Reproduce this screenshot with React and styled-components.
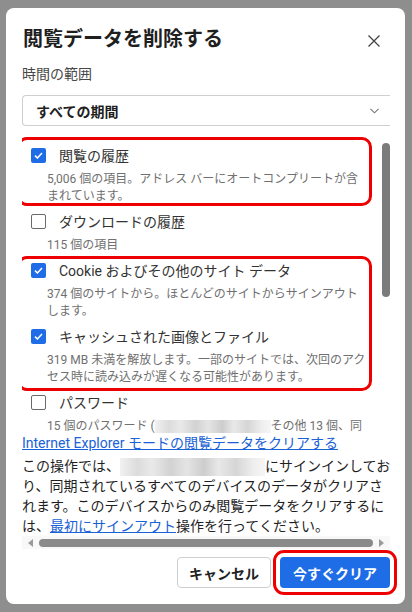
import React from 'react';
import styled, { createGlobalStyle } from 'styled-components';

const GlobalStyle = createGlobalStyle`
  html, body {
    margin: 0;
    padding: 0;
    background: #8e8e8e;
  }
  body {
    font-family: "Roboto", "Noto Sans CJK JP", sans-serif;
    width: 412px;
    height: 612px;
    overflow: hidden;
  }
`;

const Dialog = styled.div`
  margin: 8px 0 0 6px;
  width: 399px;
  height: 596px;
  box-sizing: border-box;
  background: #fff;
  border-radius: 8px;
  display: flex;
  flex-direction: column;
  overflow: hidden;
`;

const Header = styled.div`
  display: flex;
  align-items: center;
  justify-content: space-between;
  padding: 17px 24px 0 17px;
`;

const Title = styled.h1`
  margin: 0;
  font-size: 20px;
  line-height: 28px;
  font-weight: 700;
  color: #1f1f1f;
`;

const CloseButton = styled.button`
  border: none;
  background: none;
  padding: 0;
  width: 14px;
  height: 14px;
  margin-top: 4px;
  display: flex;
  align-items: center;
  justify-content: center;
  cursor: pointer;
`;

const Body = styled.div`
  display: flex;
  flex-direction: column;
  padding-left: 16px;
  width: 370px;
`;

const FieldLabel = styled.div`
  margin-top: 11px;
  font-size: 14px;
  line-height: 20px;
  color: #474747;
`;

const Select = styled.div`
  margin-top: 11px;
  margin-right: 2px;
  height: 31px;
  box-sizing: border-box;
  border: 1px solid #cfcfcf;
  border-right: none;
  border-radius: 4px 0 0 4px;
  display: flex;
  align-items: center;
  justify-content: space-between;
  padding: 0 11px 0 13px;
  font-size: 14px;
  font-weight: 700;
  color: #1f1f1f;
`;

const ListRow = styled.div`
  margin-top: 7px;
  height: 302px;
  display: flex;
  overflow: hidden;
`;

const List = styled.div`
  flex: 1;
  padding-top: 6px;
  display: flex;
  flex-direction: column;
`;

const VScroll = styled.div`
  width: 8px;
  margin: 0 2px 0 8px;
  flex-shrink: 0;
`;

const VThumb = styled.div`
  margin-top: 10px;
  height: 154px;
  border-radius: 4px;
  background: #7b7b7b;
`;

// red annotation frame drawn over a group of rows
const Group = styled.div`
  position: relative;
  display: flex;
  flex-direction: column;

  &::after {
    content: '';
    position: absolute;
    top: ${(p) => p.$top}px;
    bottom: ${(p) => p.$bottom}px;
    left: -5px;
    right: 2px;
    border: 3px solid #ee0000;
    border-radius: 10px;
    pointer-events: none;
  }
`;

const Item = styled.div`
  display: flex;
  flex-direction: column;
  padding: 0 6px 0 9px;
  width: 352px;
  box-sizing: border-box;
`;

const ItemRow = styled.label`
  height: 32px;
  display: flex;
  align-items: center;
  gap: 13px;
  font-size: 14px;
  color: #333;
`;

const Box = styled.span`
  width: 15px;
  height: 15px;
  box-sizing: border-box;
  border-radius: 2px;
  flex-shrink: 0;
  display: flex;
  align-items: center;
  justify-content: center;
  background: ${(p) => (p.$checked ? '#1f6de6' : '#fff')};
  border: ${(p) => (p.$checked ? 'none' : '1px solid #6a6a6a')};
`;

const Desc = styled.div`
  padding-left: 16px;
  font-size: 12px;
  line-height: 17px;
  color: #707070;
`;

const Blur = styled.span`
  display: inline-block;
  width: ${(p) => p.$w}px;
  height: ${(p) => p.$h}px;
  vertical-align: middle;
  background: linear-gradient(
    90deg,
    #f1f1f1 0%,
    #dcdcdc 12%,
    #e9e9e9 22%,
    #d2d2d2 35%,
    #e4e4e4 46%,
    #cdcdcd 58%,
    #e8e8e8 68%,
    #d6d6d6 80%,
    #eeeeee 92%,
    #f6f6f6 100%
  );
`;

const Link = styled.a`
  margin-top: -2px;
  font-size: 14px;
  line-height: 20px;
  color: #1a62d6;
  text-decoration: underline;
  white-space: nowrap;
`;

const Paragraph = styled.p`
  margin: 3px 0 0;
  font-size: 14px;
  line-height: 20px;
  color: #1f1f1f;

  a {
    color: #1a62d6;
  }
`;

const HScroll = styled.div`
  height: 13px;
  margin-right: 2px;
  background: #f8f8f8;
  display: flex;
  align-items: center;
  padding: 0 6px;
  gap: 6px;
`;

const Arrow = styled.span`
  width: 0;
  height: 0;
  border-top: 4px solid transparent;
  border-bottom: 4px solid transparent;
  border-left: ${(p) => (p.$dir === 'right' ? '5px solid #9a9a9a' : 'none')};
  border-right: ${(p) => (p.$dir === 'left' ? '5px solid #9a9a9a' : 'none')};
`;

const HThumb = styled.div`
  flex: 1;
  height: 8px;
  border-radius: 4px;
  background: #8a8a8a;
`;

const Footer = styled.div`
  margin-top: 8px;
  padding: 0 15px 16px 0;
  display: flex;
  justify-content: flex-end;
  gap: 9px;
`;

const Button = styled.button`
  height: 31px;
  padding: 0;
  width: ${(p) => (p.primary ? '110px' : '94px')};
  border-radius: 4px;
  font-family: inherit;
  font-size: 14px;
  font-weight: 700;
  cursor: pointer;
  background: ${(p) => (p.primary ? '#1f6de6' : '#fff')};
  color: ${(p) => (p.primary ? '#fff' : '#222')};
  border: ${(p) => (p.primary ? 'none' : '1px solid #cfcfcf')};
  outline: ${(p) => (p.marked ? '3px solid #ee0000' : 'none')};
  outline-offset: 4px;
`;

const Check = () => (
  <svg width="9" height="7" viewBox="0 0 9 7">
    <path d="M1 3.6 L3.4 6 L8 1" fill="none" stroke="#fff" strokeWidth="1.5" />
  </svg>
);

const CheckItem = ({ checked, label, children }) => (
  <Item>
    <ItemRow>
      <Box $checked={checked}>{checked && <Check />}</Box>
      {label}
    </ItemRow>
    <Desc>{children}</Desc>
  </Item>
);

const App = () => {
  return (
    <>
      <GlobalStyle />
      <Dialog>
        <Header>
          <Title>閲覧データを削除する</Title>
          <CloseButton aria-label="閉じる">
            <svg width="12" height="12" viewBox="0 0 12 12">
              <path d="M0.5 0.5 L11.5 11.5 M11.5 0.5 L0.5 11.5" stroke="#444" strokeWidth="1.3" />
            </svg>
          </CloseButton>
        </Header>
        <Body>
          <FieldLabel>時間の範囲</FieldLabel>
          <Select>
            すべての期間
            <svg width="9" height="6" viewBox="0 0 9 6">
              <path d="M0.5 0.8 L4.5 4.8 L8.5 0.8" fill="none" stroke="#777" strokeWidth="1.1" />
            </svg>
          </Select>
          <ListRow>
            <List>
              <Group $top={-2} $bottom={-1}>
                <CheckItem checked label="閲覧の履歴">
                  5,006 個の項目。アドレス バーにオートコンプリートが含まれています。
                </CheckItem>
              </Group>
              <CheckItem label="ダウンロードの履歴">115 個の項目</CheckItem>
              <Group $top={2} $bottom={-5}>
                <CheckItem checked label="Cookie およびその他のサイト データ">
                  374 個のサイトから。ほとんどのサイトからサインアウトします。
                </CheckItem>
                <CheckItem checked label="キャッシュされた画像とファイル">
                  319 MB 未満を解放します。一部のサイトでは、次回のアクセス時に読み込みが遅くなる可能性があります。
                </CheckItem>
              </Group>
              <CheckItem label="パスワード">
                15 個のパスワード (<Blur $w={116} $h={13} />
                その他 13 個、同期済み)
              </CheckItem>
            </List>
            <VScroll>
              <VThumb />
            </VScroll>
          </ListRow>
          <Link href="#">Internet Explorer モードの閲覧データをクリアする</Link>
          <Paragraph>
            この操作では、<Blur $w={145} $h={18} />にサインインしており、同期されているすべてのデバイスのデータがクリアされます。このデバイスからのみ閲覧データをクリアするには、<a href="#">最初にサインアウト</a>操作を行ってください。
          </Paragraph>
          <HScroll>
            <Arrow $dir="left" />
            <HThumb />
            <Arrow $dir="right" />
          </HScroll>
        </Body>
        <Footer>
          <Button>キャンセル</Button>
          <Button primary marked>
            今すぐクリア
          </Button>
        </Footer>
      </Dialog>
    </>
  );
};

export default App;
